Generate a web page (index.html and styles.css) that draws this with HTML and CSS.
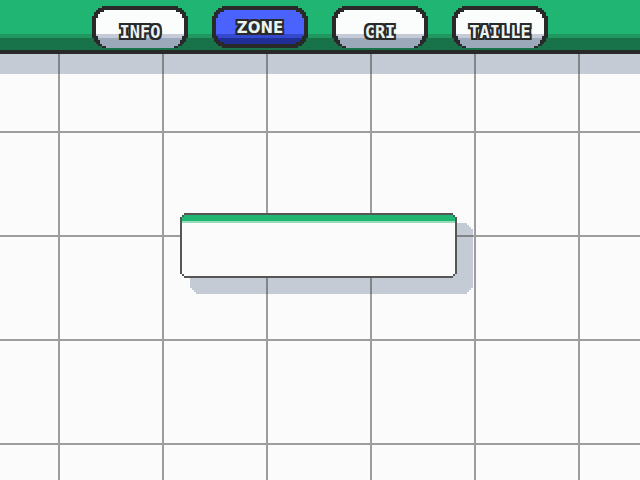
FILE: index.html
```html
<!DOCTYPE html>
<html lang="fr">
<head>
<meta charset="utf-8">
<meta name="viewport" content="width=device-width, initial-scale=1">
<title>Pokédex</title>
<link rel="stylesheet" href="styles.css">
</head>
<body>
<svg class="grid" aria-hidden="true">
  <defs>
    <pattern id="cell" x="58" y="27" width="104" height="104" patternUnits="userSpaceOnUse">
      <path d="M0 0H104V2H2V104H0Z" fill="#3a3634" shape-rendering="crispEdges"/>
    </pattern>
  </defs>
  <rect width="100%" height="100%" fill="url(#cell)"/>
</svg>
<header class="topbar">
  <nav class="tabs">
    <button class="tab" type="button"><span class="tab-fill"></span><span class="tab-label">INFO</span></button>
    <button class="tab active" type="button"><span class="tab-fill"></span><span class="tab-label">ZONE</span></button>
    <button class="tab" type="button"><span class="tab-fill"></span><span class="tab-label">CRI</span></button>
    <button class="tab" type="button"><span class="tab-fill"></span><span class="tab-label">TAILLE</span></button>
  </nav>
</header>
<main class="stage">
  <div class="panel-wrap">
    <section class="panel"><div class="panel-fill"></div></section>
  </div>
</main>
</body>
</html>
```
FILE: styles.css
```css
* { box-sizing: border-box; }

:root {
  --ink: #292929;
  --shade: #c4cbd5;
}

body {
  margin: 0;
  min-height: 100vh;
  display: flex;
  flex-direction: column;
  position: relative;
  overflow: hidden;
  background: #fbfbfb;
}

/* Grid lines, drawn over the shadows and under the bars */
.grid {
  position: absolute;
  inset: 0;
  z-index: 1;
  width: 100%;
  height: 100%;
  opacity: 0.47;
  pointer-events: none;
}

.topbar {
  position: relative;
  z-index: 2;
  height: 54px;
  padding-top: 6px;
  border-bottom: 4px solid var(--ink);
  background: linear-gradient(#21b573 34px, #1f975f 34px 38px, #19734a 38px);
}

.tabs {
  display: flex;
  justify-content: center;
  gap: 24px;
}

.tab {
  position: relative;
  display: grid;
  place-items: center;
  width: 96px;
  height: 42px;
  padding: 10px 0 0;
  border: 0;
  background: var(--ink);
  clip-path: polygon(
    0 10px, 2px 10px, 2px 6px, 4px 6px, 4px 4px, 6px 4px, 6px 2px, 10px 2px, 10px 0,
    calc(100% - 10px) 0, calc(100% - 10px) 2px, calc(100% - 6px) 2px, calc(100% - 6px) 4px,
    calc(100% - 4px) 4px, calc(100% - 4px) 6px, calc(100% - 2px) 6px, calc(100% - 2px) 10px, 100% 10px,
    100% calc(100% - 10px), calc(100% - 2px) calc(100% - 10px), calc(100% - 2px) calc(100% - 6px),
    calc(100% - 4px) calc(100% - 6px), calc(100% - 4px) calc(100% - 4px), calc(100% - 6px) calc(100% - 4px),
    calc(100% - 6px) calc(100% - 2px), calc(100% - 10px) calc(100% - 2px), calc(100% - 10px) 100%,
    10px 100%, 10px calc(100% - 2px), 6px calc(100% - 2px), 6px calc(100% - 4px), 4px calc(100% - 4px),
    4px calc(100% - 6px), 2px calc(100% - 6px), 2px calc(100% - 10px), 0 calc(100% - 10px));
}

.tab-fill {
  position: absolute;
  inset: 4px 4px 0;
  background: linear-gradient(#fbfdfc 24px, #c5cbd6 24px 28px, #9ba9ba 28px);
  clip-path: polygon(
    0 8px, 2px 8px, 2px 4px, 4px 4px, 4px 2px, 8px 2px, 8px 0,
    calc(100% - 8px) 0, calc(100% - 8px) 2px, calc(100% - 4px) 2px, calc(100% - 4px) 4px,
    calc(100% - 2px) 4px, calc(100% - 2px) 8px, 100% 8px,
    100% calc(100% - 12px), calc(100% - 2px) calc(100% - 12px), calc(100% - 2px) calc(100% - 8px),
    calc(100% - 4px) calc(100% - 8px), calc(100% - 4px) calc(100% - 4px), calc(100% - 6px) calc(100% - 4px),
    calc(100% - 6px) calc(100% - 2px), calc(100% - 10px) calc(100% - 2px), calc(100% - 10px) 100%,
    10px 100%, 10px calc(100% - 2px), 6px calc(100% - 2px), 6px calc(100% - 4px), 4px calc(100% - 4px),
    4px calc(100% - 8px), 2px calc(100% - 8px), 2px calc(100% - 12px), 0 calc(100% - 12px));
}

.tab.active { padding-top: 2px; }

.tab.active .tab-fill {
  bottom: 4px;
  background: linear-gradient(#4a63ff 24px, #3549ce 24px 28px, #202f96 28px);
  clip-path: polygon(
    0 8px, 2px 8px, 2px 4px, 4px 4px, 4px 2px, 8px 2px, 8px 0,
    calc(100% - 8px) 0, calc(100% - 8px) 2px, calc(100% - 4px) 2px, calc(100% - 4px) 4px,
    calc(100% - 2px) 4px, calc(100% - 2px) 8px, 100% 8px,
    100% calc(100% - 8px), calc(100% - 2px) calc(100% - 8px), calc(100% - 2px) calc(100% - 4px),
    calc(100% - 4px) calc(100% - 4px), calc(100% - 4px) calc(100% - 2px), calc(100% - 8px) calc(100% - 2px),
    calc(100% - 8px) 100%,
    8px 100%, 8px calc(100% - 2px), 4px calc(100% - 2px), 4px calc(100% - 4px), 2px calc(100% - 4px),
    2px calc(100% - 8px), 0 calc(100% - 8px));
}

.tab-label {
  position: relative;
  font: bold 17px/20px "DejaVu Sans Mono", monospace;
  color: #e8f3f2;
  text-shadow:
    -2px -2px var(--ink), 0 -2px var(--ink), 2px -2px var(--ink),
    -2px 0 var(--ink), 2px 0 var(--ink),
    -2px 2px var(--ink), 0 2px var(--ink), 2px 2px var(--ink);
}

.tab.active .tab-label {
  font: bold 15px/20px "DejaVu Sans", sans-serif;
}

.stage {
  flex: 1;
  border-top: 20px solid var(--shade);
  padding: 139px 16px 0;
  display: flex;
  justify-content: center;
  align-items: flex-start;
}

.panel-wrap {
  position: relative;
  width: 277px;
  height: 65px;
  margin-right: 3px;
}

.panel-wrap::before {
  content: "";
  position: absolute;
  inset: 10px -16px -16px 10px;
  background: var(--shade);
  clip-path: polygon(
    0 0, calc(100% - 6px) 0, calc(100% - 6px) 2px, calc(100% - 4px) 2px, calc(100% - 4px) 4px,
    calc(100% - 2px) 4px, calc(100% - 2px) 6px, 100% 6px,
    100% calc(100% - 6px), calc(100% - 2px) calc(100% - 6px), calc(100% - 2px) calc(100% - 4px),
    calc(100% - 4px) calc(100% - 4px), calc(100% - 4px) calc(100% - 2px), calc(100% - 6px) calc(100% - 2px),
    calc(100% - 6px) 100%,
    6px 100%, 6px calc(100% - 2px), 4px calc(100% - 2px), 4px calc(100% - 4px), 2px calc(100% - 4px),
    2px calc(100% - 6px), 0 calc(100% - 6px));
}

.panel {
  position: relative;
  z-index: 2;
  height: 100%;
  padding: 2px;
  background: #555;
  clip-path: polygon(
    0 4px, 2px 4px, 2px 2px, 4px 2px, 4px 0,
    calc(100% - 4px) 0, calc(100% - 4px) 2px, calc(100% - 2px) 2px, calc(100% - 2px) 4px, 100% 4px,
    100% calc(100% - 4px), calc(100% - 2px) calc(100% - 4px), calc(100% - 2px) calc(100% - 2px),
    calc(100% - 4px) calc(100% - 2px), calc(100% - 4px) 100%,
    4px 100%, 4px calc(100% - 2px), 2px calc(100% - 2px), 2px calc(100% - 4px), 0 calc(100% - 4px));
}

.panel-fill {
  height: 100%;
  background: linear-gradient(#21b573 6px, #96dcb9 6px 8px, #fbfbfb 8px);
  clip-path: polygon(
    0 2px, 2px 2px, 2px 0, calc(100% - 2px) 0, calc(100% - 2px) 2px, 100% 2px,
    100% calc(100% - 2px), calc(100% - 2px) calc(100% - 2px), calc(100% - 2px) 100%,
    2px 100%, 2px calc(100% - 2px), 0 calc(100% - 2px));
}
```
